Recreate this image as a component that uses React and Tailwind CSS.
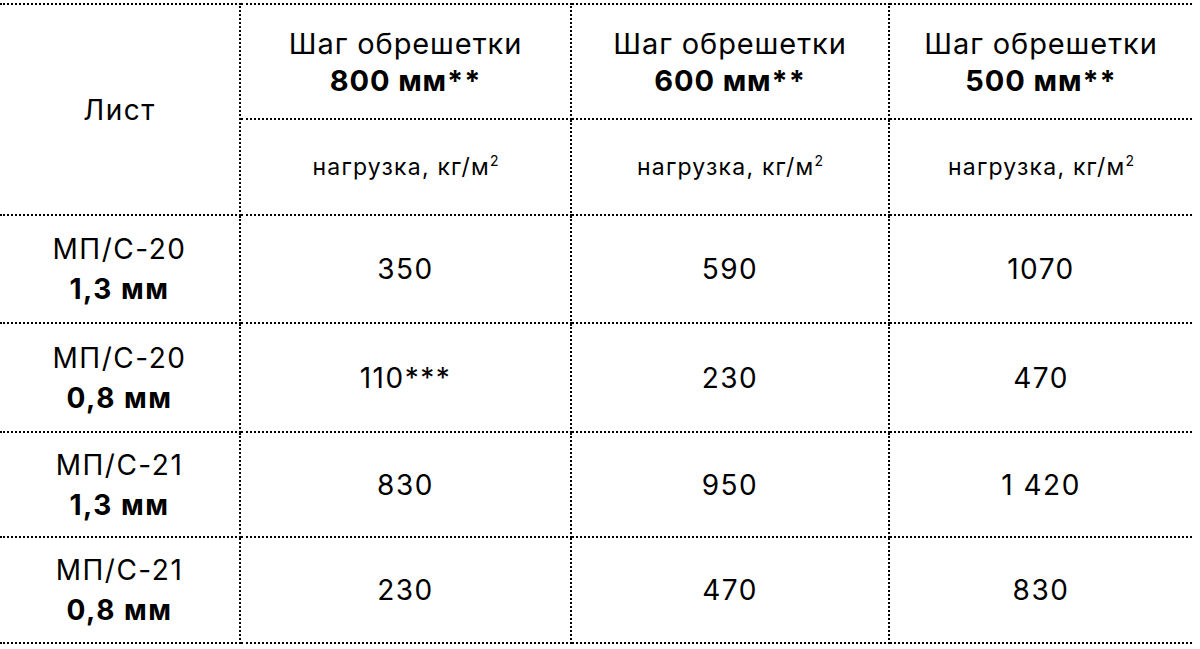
import React from 'react';

const steps = ['800', '600', '500'];

const rows = [
  { name: 'МП/С-20', thick: '1,3 мм', values: ['350', '590', '1070'], h: 'h-[108px]' },
  { name: 'МП/С-20', thick: '0,8 мм', values: ['110***', '230', '470'], h: 'h-[109px]' },
  { name: 'МП/С-21', thick: '1,3 мм', values: ['830', '950', '1 420'], h: 'h-[105px]' },
  { name: 'МП/С-21', thick: '0,8 мм', values: ['230', '470', '830'], h: 'h-[106px]' },
];

const cell = 'border-2 border-dotted border-black text-center align-middle p-0';

export default function App() {
  return (
    <div className="min-h-screen bg-white pt-[3px] text-black" style={{ fontFamily: 'Inter, "Noto Sans", sans-serif' }}>
      <table className="w-[1192px] table-fixed border-collapse">
        <colgroup>
          <col className="w-[240px]" />
          <col className="w-[331px]" />
          <col className="w-[318px]" />
          <col className="w-[303px]" />
        </colgroup>
        <thead>
          <tr className="h-[115px]">
            <th rowSpan={2} className={`${cell} border-l-0 text-[28px] tracking-[1.5px] font-normal`}>
              Лист
            </th>
            {steps.map((s, i) => (
              <th
                key={s}
                className={`${cell} ${i === 2 ? 'border-r-0' : ''} text-[29px] leading-[37px] tracking-[0.9px] font-normal`}
              >
                <div>Шаг обрешетки</div>
                <div className="font-bold">{s} мм**</div>
              </th>
            ))}
          </tr>
          <tr className="h-[96px]">
            {steps.map((s, i) => (
              <th key={s} className={`${cell} ${i === 2 ? 'border-r-0' : ''} text-[23px] tracking-[1.2px] font-normal`}>
                нагрузка, кг/м<sup className="relative top-0 text-[14px] align-[9px] tracking-normal">2</sup>
              </th>
            ))}
          </tr>
        </thead>
        <tbody>
          {rows.map((r, idx) => (
            <tr key={idx} className={r.h}>
              <td className={`${cell} border-l-0 text-[28px] leading-[40px] tracking-[1.5px]`}>
                <div>{r.name}</div>
                <div className="font-bold">{r.thick}</div>
              </td>
              {r.values.map((v, i) => (
                <td key={i} className={`${cell} ${i === 2 ? 'border-r-0' : ''} text-[28px] tracking-[1.5px]`}>
                  {v}
                </td>
              ))}
            </tr>
          ))}
        </tbody>
      </table>
    </div>
  );
}
